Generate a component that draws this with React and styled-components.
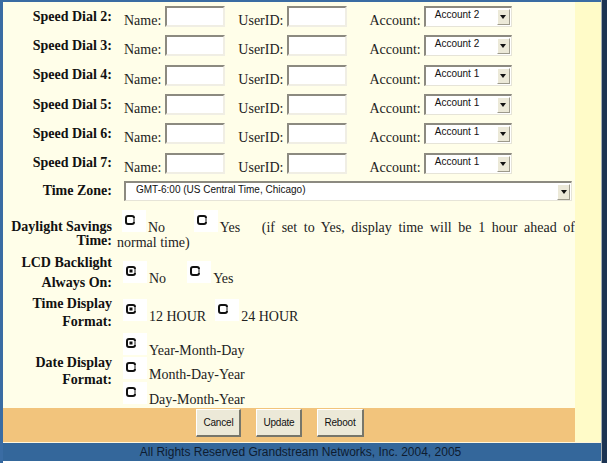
import styled, { createGlobalStyle } from "styled-components";

const GlobalStyle = createGlobalStyle`
  body {
    margin: 0;
    background: #ffffff;
  }
`;

const SERIF = `"Liberation Serif", "Times New Roman", serif`;
const SANS = `"Liberation Sans", Arial, sans-serif`;

const speedDials = [
  { n: 2, account: "Account 2" },
  { n: 3, account: "Account 2" },
  { n: 4, account: "Account 1" },
  { n: 5, account: "Account 1" },
  { n: 6, account: "Account 1" },
  { n: 7, account: "Account 1" },
];

const RadioGlyph = ({ checked }) => (
  <svg width="10" height="10" viewBox="0 0 10 10">
    <rect x="1" y="1" width="8" height="8" rx="2" fill="#fff" stroke="#111" strokeWidth="2" />
    <rect x="8" y="3" width="2" height="4" fill="#8a8a8a" />
    {checked && <rect x="3.5" y="3.5" width="3" height="3" fill="#111" />}
  </svg>
);

const Radio = ({ checked, left = 5 }) => (
  <RadioBox $left={left}>
    <RadioGlyph checked={checked} />
  </RadioBox>
);

const Select = ({ width, height, value, pad = 9 }) => (
  <SelectBox $w={width} $h={height}>
    <SelectText $pad={pad}>{value}</SelectText>
    <ArrowBtn>
      <Triangle />
    </ArrowBtn>
  </SelectBox>
);

const App = () => {
  return (
    <Page>
      <GlobalStyle />
      <Shell>
        <Body>
          <Form>
            {speedDials.map(({ n, account }) => (
              <Row key={n} $h={29.33}>
                <Label>Speed Dial {n}:</Label>
                <DialValue>
                  <Caption>Name:</Caption>
                  <TextBox $left={4} />
                  <Caption $left={13}>UserID:</Caption>
                  <TextBox $left={4} />
                  <Caption $left={22}>Account:</Caption>
                  <SelectWrap>
                    <Select width={88} height={21} value={account} />
                  </SelectWrap>
                </DialValue>
              </Row>
            ))}
            <Row $h={27}>
              <Label>Time Zone:</Label>
              <ZoneValue>
                <Select width={448} height={20} value="GMT-6:00 (US Central Time, Chicago)" pad={10} />
              </ZoneValue>
            </Row>
            <Row $h={48}>
              <Label $lh={14} $down={10}>
                Daylight Savings
                <br />
                Time:
              </Label>
              <TextValue $top={5} $justify>
                <Radio />
                <OptText $right={22}>No</OptText> <Radio left={0} />
                <OptText $right={15}>Yes</OptText>{" "}
                <span>(if set to Yes, display time will be 1 hour ahead of</span>{" "}
                <span>normal time)</span>
              </TextValue>
            </Row>
            <Row $h={39}>
              <Label $lh={20}>
                LCD Backlight
                <br />
                Always On:
              </Label>
              <TextValue $top={8}>
                <Radio checked left={6} />
                <OptText $right={21}>No</OptText>
                <Radio left={0} />
                <OptText>Yes</OptText>
              </TextValue>
            </Row>
            <Row $h={38}>
              <Label $lh={18} $down={3}>
                Time Display
                <br />
                Format:
              </Label>
              <TextValue $top={7}>
                <Radio checked left={6} />
                <OptText $right={9}>12 HOUR</OptText>
                <Radio left={0} />
                <OptText>24 HOUR</OptText>
              </TextValue>
            </Row>
            <Row $h={78}>
              <Label $lh={17} $down={4}>
                Date Display
                <br />
                Format:
              </Label>
              <TextValue $top={3}>
                <DateLine>
                  <Radio checked left={6} />
                  <OptText>Year-Month-Day</OptText>
                </DateLine>
                <DateLine>
                  <Radio left={6} />
                  <OptText>Month-Day-Year</OptText>
                </DateLine>
                <DateLine>
                  <Radio left={6} />
                  <OptText>Day-Month-Year</OptText>
                </DateLine>
              </TextValue>
            </Row>
            <ButtonBar>
              <Button>Cancel</Button>
              <Button>Update</Button>
              <Button>Reboot</Button>
            </ButtonBar>
          </Form>
          <Strip />
        </Body>
        <Footer>All Rights Reserved Grandstream Networks, Inc. 2004, 2005</Footer>
      </Shell>
      <Edge />
    </Page>
  );
};

export default App;

const Page = styled.div`
  width: 607px;
  height: 463px;
  display: flex;
  background: #ffffff;
  overflow: hidden;
`;

const Shell = styled.div`
  flex: 1;
  display: flex;
  flex-direction: column;
  border-top: 2px solid #3a6ca3;
  border-left: 3px solid #3a6ca3;
`;

const Edge = styled.div`
  width: 5px;
  border-left: 1px solid #a3aeb4;
  background: #1c3452;
`;

const Body = styled.div`
  display: flex;
  height: 440px;
  border-bottom: 1px solid #fff6dc;
`;

const Form = styled.div`
  width: 572px;
  display: flex;
  flex-direction: column;
  background: #fffee9;
`;

const Strip = styled.div`
  flex: 1;
  background: #fffbc8;
`;

const Row = styled.div`
  display: grid;
  grid-template-columns: 114px 1fr;
  height: ${(p) => p.$h}px;
  flex: none;
`;

const Label = styled.div`
  align-self: center;
  text-align: right;
  padding-right: 5px;
  padding-top: ${(p) => p.$down || 0}px;
  font-family: ${SERIF};
  font-weight: bold;
  font-size: 14px;
  line-height: ${(p) => p.$lh || 16}px;
  color: #111111;
  white-space: nowrap;
`;

const DialValue = styled.div`
  align-self: center;
  display: flex;
  align-items: flex-end;
  padding-left: 7px;
`;

const Caption = styled.span`
  font-family: ${SERIF};
  font-size: 14px;
  line-height: 14px;
  color: #222222;
  margin-left: ${(p) => p.$left || 0}px;
  margin-bottom: -1px;
`;

const TextBox = styled.div`
  width: 56px;
  height: 17px;
  margin-left: ${(p) => p.$left}px;
  background: #ffffff;
  border-top: 2px solid #8c8a80;
  border-left: 2px solid #8c8a80;
  border-right: 2px solid #f0eee4;
  border-bottom: 2px solid #f0eee4;
`;

const SelectWrap = styled.div`
  margin-left: 3px;
  display: flex;
`;

const ZoneValue = styled.div`
  align-self: center;
  padding-left: 7px;
  display: flex;
`;

const SelectBox = styled.div`
  box-sizing: border-box;
  width: ${(p) => p.$w}px;
  height: ${(p) => p.$h}px;
  display: flex;
  justify-content: space-between;
  align-items: flex-start;
  background: #ffffff;
  border-top: 2px solid #8c8a80;
  border-left: 2px solid #8c8a80;
  border-right: 1px solid #e6e4d8;
  border-bottom: 1px solid #e6e4d8;
`;

const SelectText = styled.span`
  padding: 1px 0 0 ${(p) => p.$pad}px;
  font-family: ${SANS};
  font-size: 10px;
  line-height: 12px;
  color: #111111;
  white-space: nowrap;
`;

const ArrowBtn = styled.span`
  box-sizing: border-box;
  width: 13px;
  height: 16px;
  margin: 1px 1px 0 0;
  display: flex;
  align-items: center;
  justify-content: center;
  background: #ece9d8;
  border-top: 1px solid #ffffff;
  border-left: 1px solid #ffffff;
  border-right: 1px solid #9d9a8c;
  border-bottom: 1px solid #9d9a8c;
`;

const Triangle = styled.span`
  width: 0;
  height: 0;
  border-left: 3.5px solid transparent;
  border-right: 3.5px solid transparent;
  border-top: 4px solid #111111;
`;

const TextValue = styled.div`
  padding-top: ${(p) => p.$top}px;
  font-family: ${SERIF};
  font-size: 14px;
  line-height: 15px;
  color: #222222;
  text-align: ${(p) => (p.$justify ? "justify" : "left")};
`;

const RadioBox = styled.span`
  display: inline-block;
  width: 24px;
  height: 22px;
  margin-left: ${(p) => p.$left}px;
  background: #ffffff;
  vertical-align: baseline;
  position: relative;

  svg {
    position: absolute;
    left: 3px;
    top: 5px;
  }
`;

const OptText = styled.span`
  margin-left: 2px;
  margin-right: ${(p) => p.$right || 0}px;
`;

const DateLine = styled.div`
  height: 24.5px;
`;

const ButtonBar = styled.div`
  margin-top: auto;
  height: 34px;
  display: flex;
  justify-content: center;
  align-items: flex-start;
  gap: 15px;
  padding: 1px 18px 0 0;
  background: #f2c47c;
`;

const Button = styled.button`
  height: 28px;
  padding: 0 6px;
  font-family: ${SANS};
  font-size: 10px;
  letter-spacing: -0.2px;
  color: #111111;
  background: #ece9d8;
  border-top: 1px solid #ffffff;
  border-left: 1px solid #ffffff;
  border-right: 2px solid #77766a;
  border-bottom: 2px solid #77766a;
  border-radius: 0;
`;

const Footer = styled.div`
  height: 18px;
  display: flex;
  align-items: center;
  justify-content: center;
  background: #34679b;
  font-family: ${SANS};
  font-size: 12px;
  color: #0e1c30;
  padding-right: 3px;
`;
